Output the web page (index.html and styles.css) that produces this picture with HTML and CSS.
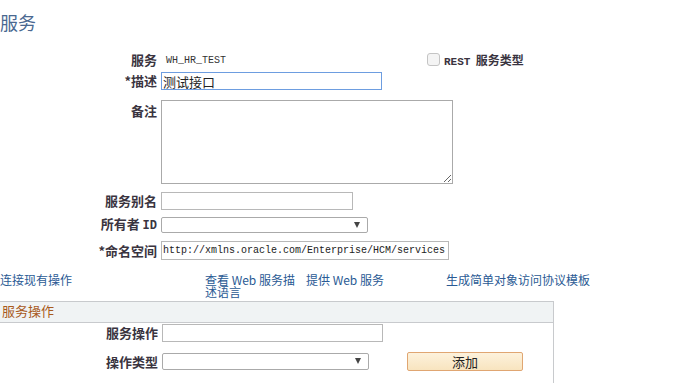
FILE: index.html
```html
<!DOCTYPE html>
<html lang="zh">
<head>
  <meta charset="UTF-8" />
  <title>服务</title>
  <link rel="stylesheet" href="styles.css">
</head>
<body>
  <h1 class="titulo">服务</h1>

  <div class="form">
    <div class="fila fila-servicio">
      <span class="etiqueta">服务</span>
      <span class="valor">WH_HR_TEST</span>
      <label class="rest">
        <span class="casilla"></span>
        <span class="rest-texto"><span class="mono">REST</span>&nbsp; 服务类型</span>
      </label>
    </div>

    <div class="fila fila-desc">
      <span class="etiqueta">*描述</span>
      <input type="text" class="campo campo-activo" value="测试接口" />
    </div>

    <div class="fila fila-nota">
      <span class="etiqueta">备注</span>
      <textarea class="area"></textarea>
    </div>

    <div class="fila fila-alias">
      <span class="etiqueta">服务别名</span>
      <input type="text" class="campo campo-alias" />
    </div>

    <div class="fila fila-owner">
      <span class="etiqueta">所有者 <span class="mono">ID</span></span>
      <div class="lista lista-owner"></div>
    </div>

    <div class="fila fila-ns">
      <span class="etiqueta">*命名空间</span>
      <input type="text" class="campo campo-ns" value="http://xmlns.oracle.com/Enterprise/HCM/services" />
    </div>
  </div>

  <div class="enlaces">
    <a href="#" class="enlace enlace-1">连接现有操作</a>
    <a href="#" class="enlace enlace-2">查看 Web 服务描述语言</a>
    <a href="#" class="enlace enlace-3">提供 Web 服务</a>
    <a href="#" class="enlace enlace-4">生成简单对象访问协议模板</a>
  </div>

  <div class="seccion">
    <div class="seccion-cabecera">服务操作</div>
    <div class="seccion-cuerpo">
      <div class="fila fila-op">
        <span class="etiqueta">服务操作</span>
        <input type="text" class="campo campo-op" />
      </div>
      <div class="fila fila-tipo">
        <span class="etiqueta">操作类型</span>
        <div class="lista lista-tipo"></div>
        <button class="boton">添加</button>
      </div>
    </div>
  </div>
</body>
</html>
```

FILE: styles.css
```css
body {
  margin: 0;
  padding: 0;
  font-family: "Noto Sans CJK SC", "Liberation Sans", sans-serif;
  background-color: #ffffff;
  color: #333;
  overflow: hidden;
}

.titulo {
  margin: 10px 0 0 0;
  font-size: 18px;
  font-weight: normal;
  line-height: 24px;
  color: #4a6890;
}

.mono {
  font-family: "Liberation Mono", monospace;
}

.form {
  display: flex;
  flex-direction: column;
}

.fila {
  display: flex;
  align-items: center;
}

.etiqueta {
  width: 157px;
  flex-shrink: 0;
  text-align: right;
  font-size: 13px;
  font-weight: bold;
  line-height: 16px;
  color: #3a3440;
  margin-right: 4px;
}

.etiqueta .mono {
  font-size: 12px;
}

.fila-servicio {
  margin-top: 16px;
  height: 20px;
}

.valor {
  font-family: "Liberation Mono", monospace;
  font-size: 10px;
  color: #333;
  margin-left: 5px;
  width: 261px;
}

.rest {
  display: flex;
  align-items: center;
  margin-top: -2px;
}

.casilla {
  width: 11px;
  height: 11px;
  border: 1px solid #c4c4c4;
  border-radius: 3px;
  background-color: #f4f4f4;
  margin-right: 4px;
}

.rest-texto {
  font-size: 12px;
  font-weight: bold;
  color: #3a3440;
}

.rest-texto .mono {
  font-size: 11px;
}

.campo {
  height: 18px;
  box-sizing: border-box;
  border: 1px solid #b8b8b8;
  padding: 0 1px;
  margin: 0;
  font-family: "Noto Sans CJK SC", sans-serif;
  font-size: 13px;
  color: #222;
  outline: none;
}

.fila-desc {
  margin-top: 2px;
}

.campo-activo {
  width: 221px;
  border-color: #6d9de0;
}

.fila-nota {
  margin-top: 10px;
  align-items: flex-start;
}

.fila-nota .etiqueta {
  margin-top: 3px;
}

.area {
  width: 292px;
  height: 84px;
  box-sizing: border-box;
  border: 1px solid #aaa;
  margin: 0;
  resize: both;
}

.fila-alias {
  margin-top: 8px;
}

.campo-alias {
  width: 192px;
}

.fila-owner {
  margin-top: 6px;
}

.lista {
  height: 16px;
  box-sizing: border-box;
  border: 1px solid #aaa;
  border-radius: 2px;
  position: relative;
}

.lista::after {
  content: "";
  position: absolute;
  right: 7px;
  top: 4px;
  border-left: 3px solid transparent;
  border-right: 3px solid transparent;
  border-top: 6px solid #444;
}

.lista-owner {
  width: 207px;
}

.fila-ns {
  margin-top: 7px;
}

.campo-ns {
  width: 288px;
  height: 19px;
  font-family: "Liberation Mono", monospace;
  font-size: 10px;
}

.enlaces {
  display: grid;
  grid-template-columns: 205px 101px 140px auto;
  margin-top: 14px;
  height: 27px;
}

.enlace {
  font-family: "Noto Sans CJK SC", "Liberation Sans", sans-serif;
  font-size: 12px;
  line-height: 12px;
  color: #2a5a94;
  text-decoration: none;
}

.enlace-2 {
  width: 96px;
}

.seccion {
  width: 554px;
  box-sizing: border-box;
  border-right: 1px solid #c8cacd;
  height: 90px;
}

.seccion-cabecera {
  height: 20px;
  background-color: #f0f3f4;
  border-top: 1px solid #c8cacd;
  border-bottom: 1px solid #c8cacd;
  font-size: 13px;
  line-height: 18px;
  color: #a85a1c;
  padding-left: 2px;
}

.seccion-cuerpo .etiqueta {
  width: 158px;
}

.fila-op {
  margin-top: 1px;
}

.campo-op {
  width: 221px;
}

.fila-tipo {
  margin-top: 10px;
}

.lista-tipo {
  width: 207px;
  height: 17px;
}

.boton {
  margin-left: 38px;
  width: 116px;
  height: 19px;
  box-sizing: border-box;
  border: 1px solid #e0a672;
  border-radius: 2px;
  background: linear-gradient(#fdf2dc, #f8e4bf);
  font-family: "Noto Sans CJK SC", sans-serif;
  font-size: 13px;
  line-height: 15px;
  color: #222;
  padding: 0;
}
```
